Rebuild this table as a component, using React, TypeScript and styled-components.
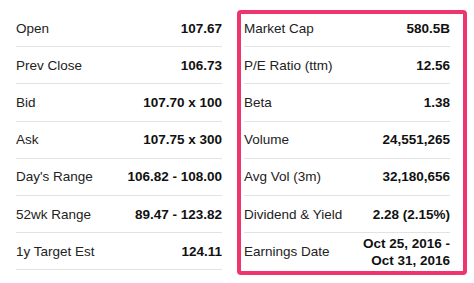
import styled, { createGlobalStyle } from "styled-components";

const GlobalStyle = createGlobalStyle`
  html, body {
    margin: 0;
    padding: 0;
    background: #ffffff;
  }
  body {
    font-family: "Liberation Sans", Arial, Helvetica, sans-serif;
    -webkit-font-smoothing: antialiased;
  }
`;

const Page = styled.main`
  width: 474px;
  height: 283px;
  box-sizing: border-box;
  padding: 10px 0 0 16px;
  display: grid;
  grid-template-columns: 206px 206px;
  column-gap: 22px;
  align-items: start;
  overflow: hidden;
`;

const Column = styled.section`
  display: flex;
  flex-direction: column;
`;

// pink annotation drawn over the right-hand column
const Highlighted = styled(Column)`
  position: relative;

  &::after {
    content: "";
    position: absolute;
    top: 0;
    left: -7px;
    right: -17px;
    bottom: -5px;
    border: 4px solid #ef356d;
    border-radius: 4px;
    pointer-events: none;
  }
`;

const Row = styled.div<{ $last?: boolean }>`
  height: 37.2px;
  box-sizing: border-box;
  display: flex;
  align-items: center;
  justify-content: space-between;
  border-bottom: ${(p) => (p.$last ? "none" : "1px solid #e2e2e2")};
  font-size: 13.5px;
`;

const Label = styled.span`
  color: #222222;
`;

const Value = styled.span`
  color: #111111;
  font-weight: 700;
  text-align: right;
  line-height: 17px;
`;

const left: [string, string][] = [
  ["Open", "107.67"],
  ["Prev Close", "106.73"],
  ["Bid", "107.70 x 100"],
  ["Ask", "107.75 x 300"],
  ["Day's Range", "106.82 - 108.00"],
  ["52wk Range", "89.47 - 123.82"],
  ["1y Target Est", "124.11"],
];

const right: [string, string][] = [
  ["Market Cap", "580.5B"],
  ["P/E Ratio (ttm)", "12.56"],
  ["Beta", "1.38"],
  ["Volume", "24,551,265"],
  ["Avg Vol (3m)", "32,180,656"],
  ["Dividend & Yield", "2.28 (2.15%)"],
];

function App() {
  return (
    <>
      <GlobalStyle />
      <Page>
        <Column>
          {left.map(([label, value]) => (
            <Row key={label}>
              <Label>{label}</Label>
              <Value>{value}</Value>
            </Row>
          ))}
        </Column>
        <Highlighted>
          {right.map(([label, value]) => (
            <Row key={label}>
              <Label>{label}</Label>
              <Value>{value}</Value>
            </Row>
          ))}
          <Row $last>
            <Label>Earnings Date</Label>
            <Value>
              Oct 25, 2016 -
              <br />
              Oct 31, 2016
            </Value>
          </Row>
        </Highlighted>
      </Page>
    </>
  );
}

export default App;
